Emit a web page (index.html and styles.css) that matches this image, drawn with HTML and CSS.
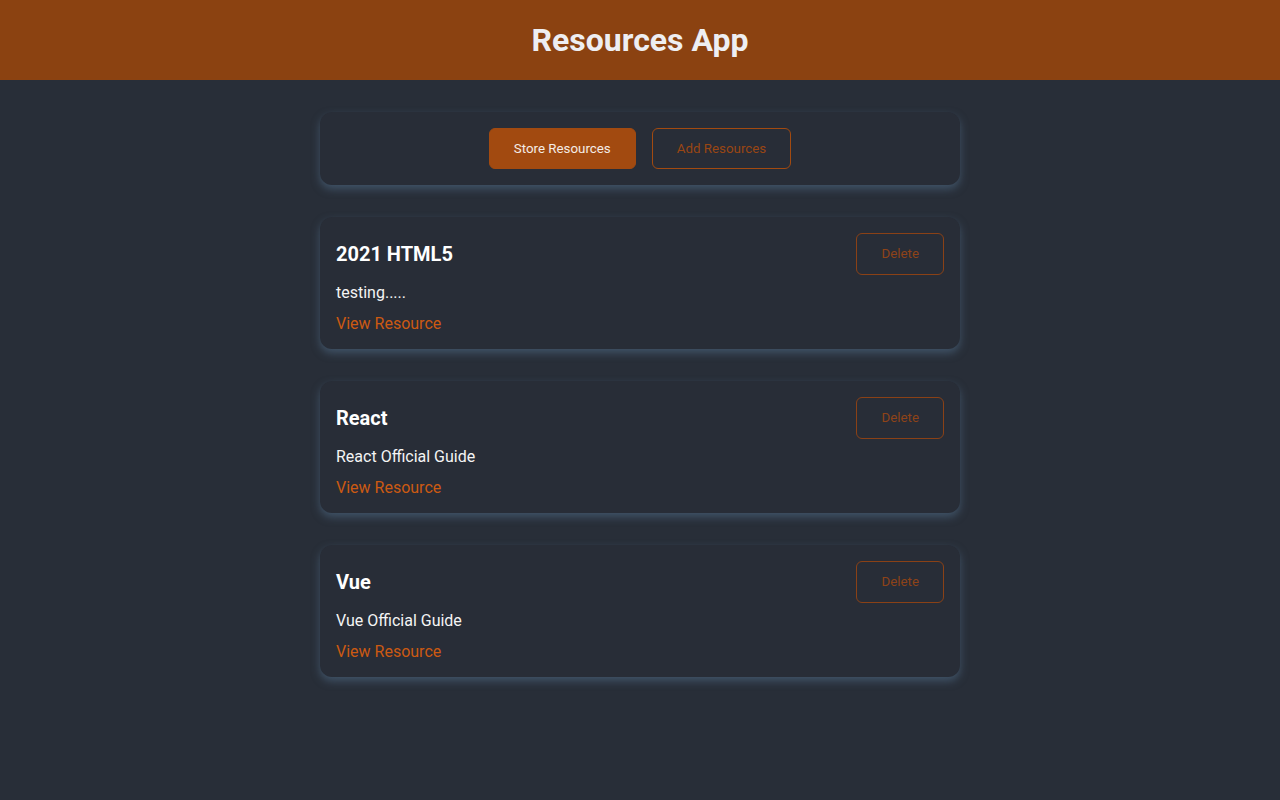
FILE: index.html
```html
<!DOCTYPE html>
<html lang="en">
<head>
<meta charset="utf-8">
<title>Resources App</title>
<link rel="stylesheet" href="styles.css">
</head>
<body>
<header class="app-header">
  <h1 class="app-title">Resources App</h1>
</header>
<main class="container">
  <section class="card tabs">
    <button class="btn btn-solid">Store Resources</button>
    <button class="btn btn-flat">Add Resources</button>
  </section>
  <ul class="resource-list">
    <li class="card resource">
      <div class="resource-head">
        <h3 class="resource-title">2021 HTML5</h3>
        <button class="btn btn-flat btn-delete">Delete</button>
      </div>
      <p class="resource-desc">testing.....</p>
      <a class="resource-link" href="#">View Resource</a>
    </li>
    <li class="card resource">
      <div class="resource-head">
        <h3 class="resource-title">React</h3>
        <button class="btn btn-flat btn-delete">Delete</button>
      </div>
      <p class="resource-desc">React Official Guide</p>
      <a class="resource-link" href="#">View Resource</a>
    </li>
    <li class="card resource">
      <div class="resource-head">
        <h3 class="resource-title">Vue</h3>
        <button class="btn btn-flat btn-delete">Delete</button>
      </div>
      <p class="resource-desc">Vue Official Guide</p>
      <a class="resource-link" href="#">View Resource</a>
    </li>
  </ul>
</main>
</body>
</html>
```

FILE: styles.css
```css
* { box-sizing: border-box; }
html, body {
  margin: 0;
  padding: 0;
  background: #282e38;
  font-family: Roboto, "Liberation Sans", sans-serif;
  color: #f2f2f2;
  min-height: 800px;
}
.app-header {
  height: 80px;
  background: #8b4211;
  display: flex;
  align-items: center;
  justify-content: center;
}
.app-title {
  margin: 0;
  font-size: 32px;
  font-weight: 700;
  color: #eeeef2;
}
.container {
  width: 640px;
  margin: 32px auto 0;
}
.card {
  background: #282d37;
  border-radius: 12px;
  box-shadow: 0 4px 8px rgba(80, 108, 135, 0.6);
  padding: 16px;
}
.tabs {
  display: flex;
  justify-content: center;
  gap: 16px;
}
.btn {
  font-family: Roboto, "Liberation Sans", sans-serif;
  font-size: 13.333px;
  line-height: 15px;
  padding: 12px 24px;
  border-radius: 6px;
  border: 1px solid #a24a10;
  cursor: pointer;
}
.btn-solid {
  background: #a24a10;
  color: #f4ece6;
}
.btn-flat {
  background: transparent;
  color: #9a4613;
}
.resource-list {
  list-style: none;
  margin: 32px 0 0;
  padding: 0;
  display: flex;
  flex-direction: column;
  gap: 32px;
}
.resource-head {
  display: flex;
  justify-content: space-between;
  align-items: center;
}
.resource-title {
  margin: 0;
  font-size: 20px;
  font-weight: 700;
  color: #ffffff;
}
.btn-delete {
  line-height: 16px;
  color: #8e4318;
  border-color: #8a4116;
}
.resource-desc {
  margin: 8px 0 12px;
  font-size: 16px;
  line-height: 19px;
  color: #f4f4f4;
}
.resource-link {
  display: block;
  font-size: 16px;
  line-height: 19px;
  color: #cc5a12;
  text-decoration: none;
}
```
